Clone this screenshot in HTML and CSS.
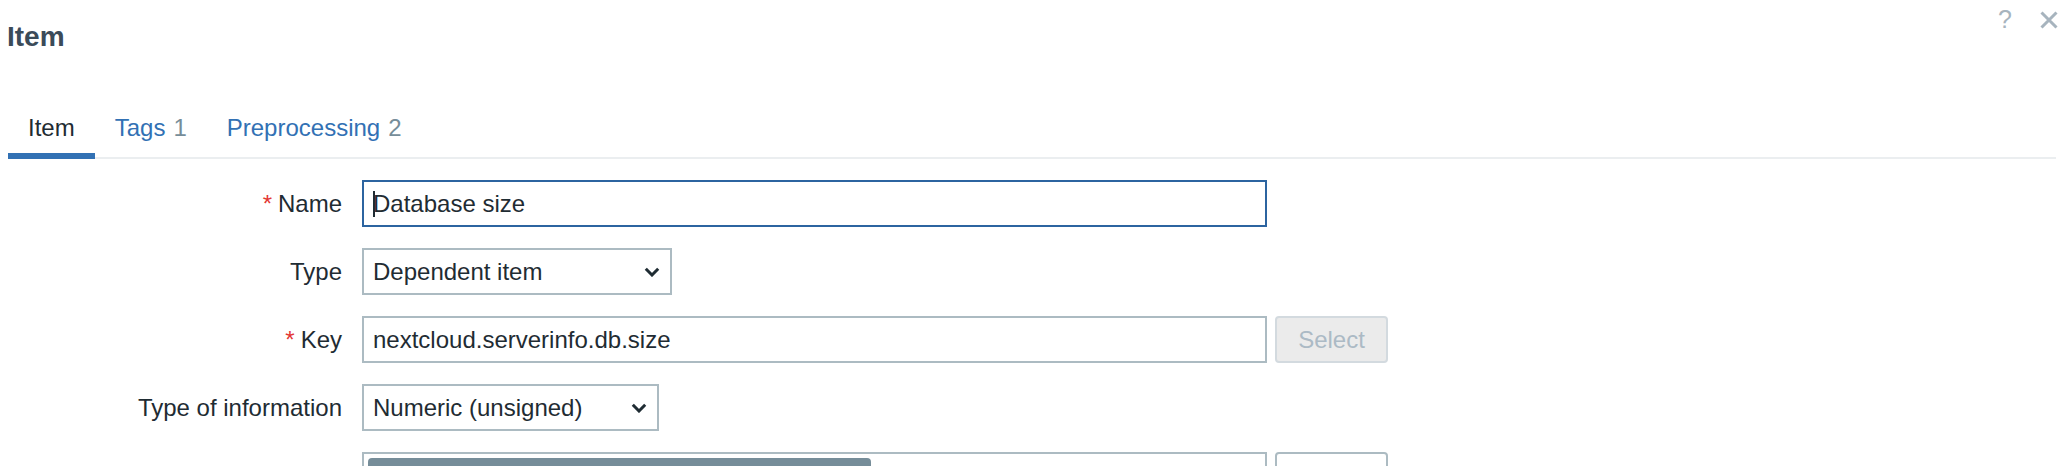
FILE: index.html
```html
<!DOCTYPE html>
<html lang="en">
<head>
<meta charset="utf-8">
<title>Item</title>
<link rel="stylesheet" href="styles.css">
</head>
<body>
<div class="dialog">
  <div class="dlg-head">
    <h4 class="dlg-title">Item</h4>
    <div class="dlg-actions">
      <span class="btn-help">?</span>
      <svg class="btn-close" width="18" height="18" viewBox="0 0 18 18"><path d="M1.5 1.5L16.5 16.5M16.5 1.5L1.5 16.5" stroke="#a7b4be" stroke-width="3" fill="none"/></svg>
    </div>
  </div>

  <ul class="tabs">
    <li class="tab active"><span class="tab-link">Item</span></li>
    <li class="tab"><span class="tab-link">Tags</span><span class="count">1</span></li>
    <li class="tab"><span class="tab-link">Preprocessing</span><span class="count">2</span></li>
  </ul>

  <div class="form">
    <div class="lbl req">Name</div>
    <div class="field">
      <div class="input wide focused"><span class="caret"></span>Database size</div>
    </div>

    <div class="lbl">Type</div>
    <div class="field">
      <div class="select sel-type"><span>Dependent item</span>
        <svg class="chev" width="16" height="10" viewBox="0 0 16 10"><path d="M1.8 1.8L8 8L14.2 1.8" stroke="#1f2c33" stroke-width="3" fill="none"/></svg>
      </div>
    </div>

    <div class="lbl req">Key</div>
    <div class="field">
      <div class="input wide">nextcloud.serverinfo.db.size</div>
      <div class="btn disabled">Select</div>
    </div>

    <div class="lbl">Type of information</div>
    <div class="field">
      <div class="select sel-info"><span>Numeric (unsigned)</span>
        <svg class="chev" width="16" height="10" viewBox="0 0 16 10"><path d="M1.8 1.8L8 8L14.2 1.8" stroke="#1f2c33" stroke-width="3" fill="none"/></svg>
      </div>
    </div>

    <div class="lbl"></div>
    <div class="field">
      <div class="input wide multi"><span class="chip"></span></div>
      <div class="btn"></div>
    </div>
  </div>
</div>
</body>
</html>
```

FILE: styles.css
```css
html, body {
  margin: 0;
  padding: 0;
  background: #ffffff;
  overflow: hidden;
}

body {
  font-family: "Liberation Sans", Arial, sans-serif;
  font-size: 24px;
  color: #1f2c33;
}

.dialog {
  height: 466px;
  overflow: hidden;
  padding: 0 10px 0 8px;
  box-sizing: border-box;
}

.dlg-head {
  display: flex;
  justify-content: space-between;
  align-items: flex-start;
  height: 50px;
  margin-right: -2px;
}

.dlg-title {
  margin: 23px 0 0 -1px;
  font-size: 28px;
  line-height: 28px;
  font-weight: bold;
  color: #3b4b59;
}

.dlg-actions {
  display: flex;
  align-items: center;
  margin-top: 7px;
  height: 25px;
}

.btn-help {
  font-size: 25px;
  line-height: 25px;
  color: #a7b4be;
}

.btn-close {
  margin-left: 28px;
  display: block;
}

.tabs {
  list-style: none;
  margin: 51px 0 0 0;
  padding: 0;
  display: flex;
  border-bottom: 2px solid #ebeef0;
}

.tab {
  padding: 15px 20px 13px;
  line-height: 24px;
  border-bottom: 6px solid transparent;
  margin-bottom: -2px;
  color: #3271b4;
}

.tab.active {
  border-bottom-color: #3271b4;
  color: #1f2c33;
}

.count {
  color: #768d99;
  margin-left: 8px;
}

.form {
  margin-top: 21px;
  display: grid;
  grid-template-columns: 334px 1fr;
  column-gap: 20px;
  row-gap: 21px;
  align-items: center;
}

.lbl {
  text-align: right;
  line-height: 24px;
}

.lbl.req::before {
  content: "*";
  color: #e33734;
  margin-right: 6px;
}

.field {
  display: flex;
  align-items: center;
  gap: 8px;
}

.input {
  box-sizing: border-box;
  height: 47px;
  border: 2px solid #acbbc2;
  padding: 0 9px;
  display: flex;
  align-items: center;
  line-height: 24px;
  background: #fff;
}

.input.wide {
  width: 905px;
}

.input.focused {
  border-color: #2c64a0;
}

.caret {
  display: inline-block;
  width: 2px;
  height: 26px;
  background: #1f2c33;
  margin-right: -2px;
}

.select {
  box-sizing: border-box;
  height: 47px;
  border: 2px solid #acbbc2;
  padding: 0 10px 0 9px;
  display: flex;
  align-items: center;
  justify-content: space-between;
  line-height: 24px;
}

.sel-type {
  width: 310px;
}

.sel-info {
  width: 297px;
}

.chev {
  display: block;
}

.btn {
  box-sizing: border-box;
  width: 113px;
  height: 47px;
  border: 2px solid #acbbc2;
  border-radius: 4px;
  background: #fff;
  display: flex;
  align-items: center;
  justify-content: center;
}

.btn.disabled {
  background: #ebebeb;
  border-color: #d3dadf;
  color: #acbac5;
}

.input.multi {
  align-items: flex-start;
  padding: 4px 4px;
}

.chip {
  display: block;
  width: 503px;
  height: 30px;
  background: #768d99;
  border-radius: 4px;
}
```
